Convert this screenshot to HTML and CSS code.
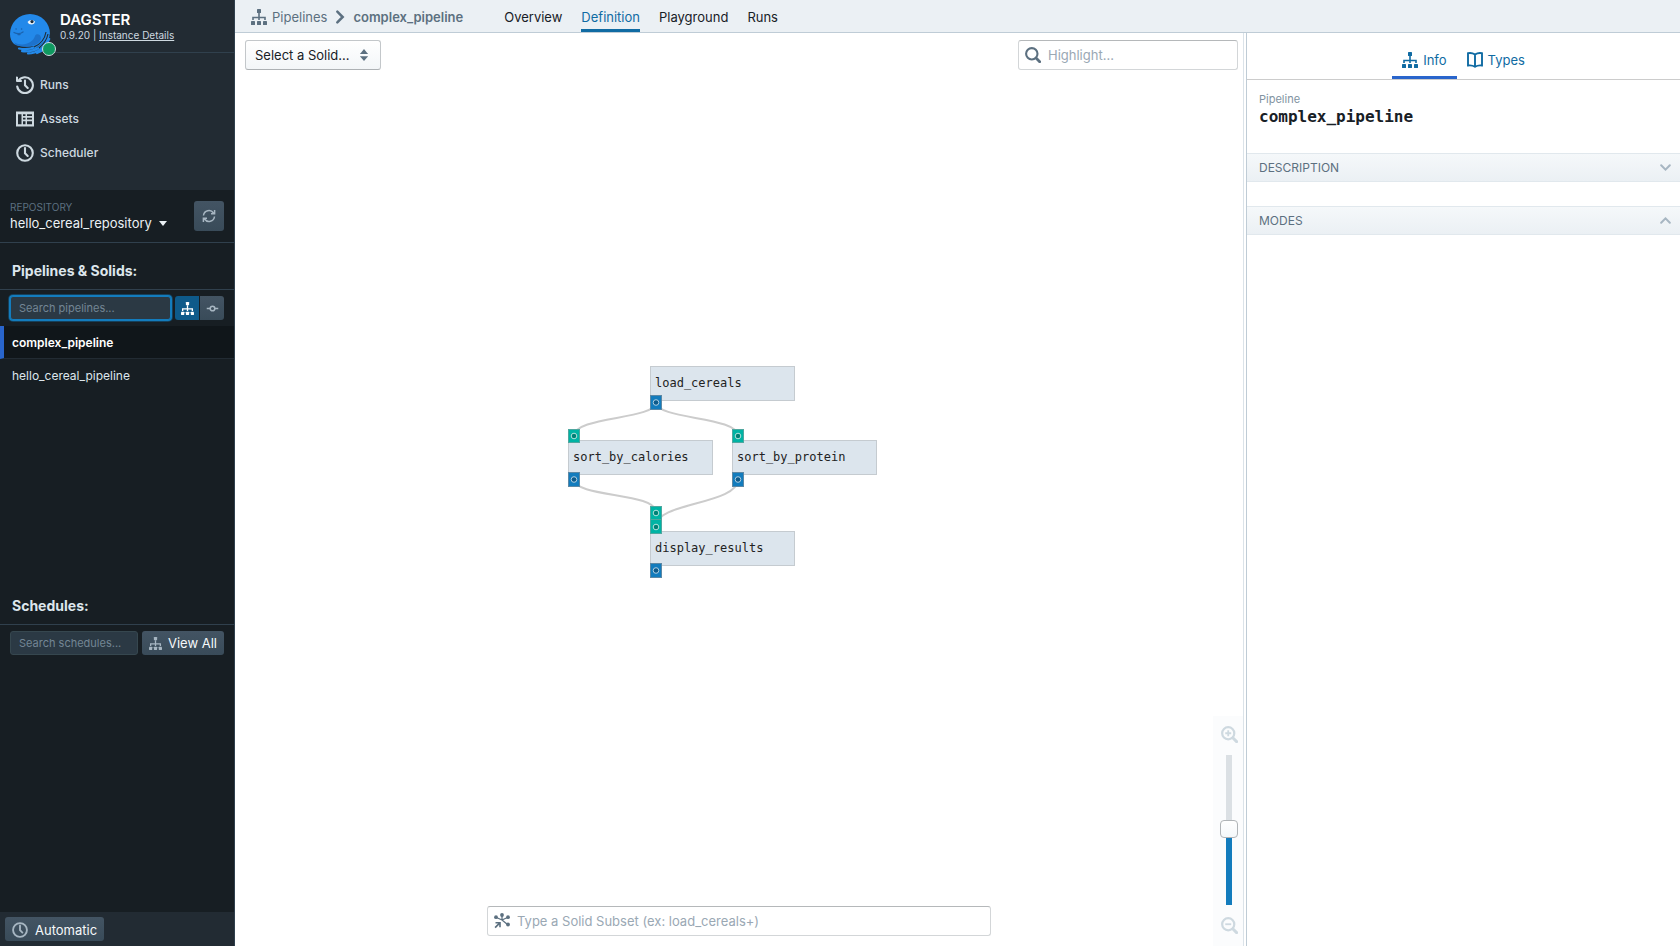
FILE: index.html
```html
<!DOCTYPE html>
<html lang="en">
<head>
<meta charset="utf-8">
<title>complex_pipeline – Dagster</title>
<link rel="stylesheet" href="styles.css">
</head>
<body>
<svg class="sprite" aria-hidden="true">
  <symbol id="i-tree" viewBox="0 0 16 16"><rect x="6" y="0" width="4" height="4" rx=".6"/><rect x="0" y="12" width="4" height="4" rx=".6"/><rect x="6" y="12" width="4" height="4" rx=".6"/><rect x="12" y="12" width="4" height="4" rx=".6"/><path d="M8 4v7M2 11V8.500h12V11" fill="none" stroke="currentColor" stroke-width="1.600"/></symbol>
  <symbol id="i-clock" viewBox="0 0 18 18"><g fill="none" stroke="currentColor" stroke-width="2.100"><circle cx="9" cy="9" r="7.800"/><path d="M9 4v5.200l2.700 2.700" stroke-linecap="round"/></g></symbol>
  <symbol id="i-history" viewBox="0 0 18 18"><g fill="none" stroke="currentColor" stroke-width="2.100"><path d="M2.300 5A7.900 7.900 0 1 1 1.200 10.500M9 4.500v4.700l2.700 2.700" stroke-linecap="round"/></g><path d="M0 .8q1-.8 2 .2v3h3.500q1.200 1 0 2H1Q0 6 0 5z"/></symbol>
  <symbol id="i-search" viewBox="0 0 16 16"><g fill="none" stroke="currentColor"><circle cx="6.800" cy="6.800" r="5.700" stroke-width="2.100"/><path d="M11.300 11.300l3.400 3.400" stroke-width="2.800" stroke-linecap="round"/></g></symbol>
  <symbol id="i-chevron" viewBox="0 0 12 12"><path d="M2 4l4 4 4-4" fill="none" stroke="currentColor" stroke-width="1.900" stroke-linecap="round"/></symbol>
</svg>
<div class="app">
  <aside class="sidebar">
    <div class="top-nav">
      <header class="brand">
        <svg class="logo" viewBox="0 0 46 44" role="img" aria-label="Dagster">
          <g fill="none" stroke="#2389ea" stroke-width="2.200" stroke-linecap="round"><path d="M9 34.500C21 37 32 32 37 20M12 37.200C24 38.500 34 33 38.500 22M18 39.500C27 39.500 35 34 39.200 25M27 39C32 37.500 36 34 38.500 29"/></g>
          <path d="M0 20A20 20 0 0 1 40 20C38 24 36 26 33 28 25 34 11 34 4 30Q0 26 0 20z" fill="#2389ea"/>
          <path d="M4 28.500C13 33 23 29 25 22c1-3 6-2 6 2 0 7-14 11-25 7z" fill="#1d72cc"/>
          <path d="M24 33C31 30 35 24 36 18M29 34C34 30 37 25 38 20" fill="none" stroke="#222b33" stroke-width="1.100"/>
          <path d="M17.500 8q3-3.500 7.500-.5-.5 3-3.500 3-3 0-4-2.500z" fill="#eef5fa"/><circle cx="22" cy="7.600" r="1.600" fill="#1c2b3a"/>
          <path d="M4 18.500q5 2.500 9-.5M6 15h.2M11.500 15h.2M8 20.500h2" fill="none" stroke="#1b62ad" stroke-width="1.300" stroke-linecap="round"/>
          <circle cx="39" cy="35" r="6.500" fill="#0f9960" stroke="#cdd9e0"/>
        </svg>
        <div class="brand-text">
          <div class="brand-name">DAGSTER</div>
          <div class="version">0.9.20 | <a href="#">Instance Details</a></div>
        </div>
      </header>
      <nav class="main-links">
        <a href="#"><svg><use href="#i-history"/></svg>Runs</a>
        <a href="#"><svg viewBox="0 0 18 18"><path fill-rule="evenodd" d="M0 1.500h18v15H0zM2 4.300v10h3.500v-10zM7 4.300v1.800h2.500V4.300zm4 0v1.800h5V4.300zM7 7.700v1.800h2.500V7.700zm4 0v1.800h5V7.700zM7 11.200v3h2.500v-3zm4 0v3h5v-3z"/></svg>Assets</a>
        <a href="#"><svg><use href="#i-clock"/></svg>Scheduler</a>
      </nav>
    </div>
    <div class="repo">
      <div class="repo-info">
        <div class="repo-label">REPOSITORY</div>
        <button class="repo-name">hello_cereal_repository<svg viewBox="0 0 8 5"><path d="M0 0h8L4 5z"/></svg></button>
      </div>
      <button class="dark-btn refresh" aria-label="Reload repository"><svg viewBox="0 0 14 14"><g fill="none" stroke="currentColor" stroke-width="1.500"><path d="M1.500 6.500a5.500 5.500 0 0 1 10-2.500M12.500 7.500a5.500 5.500 0 0 1-10 2.500M12.600 1v3.700H9M1.400 13V9.300H5"/></g></svg></button>
    </div>
    <section class="pipelines">
      <h2>Pipelines &amp; Solids:</h2>
      <div class="tools">
        <input class="dark-input focused" type="text" placeholder="Search pipelines..." aria-label="Search pipelines" autofocus>
        <div class="toggle">
          <button class="dark-btn active" aria-label="Pipelines"><svg><use href="#i-tree"/></svg></button>
          <button class="dark-btn" aria-label="Solids"><svg viewBox="0 0 14 14"><g fill="none" stroke="currentColor" stroke-width="1.700"><circle cx="7" cy="7" r="2.500"/><path d="M.8 7h3.500M9.700 7h3.500"/></g></svg></button>
        </div>
      </div>
      <ul class="list">
        <li class="selected"><a href="#">complex_pipeline</a></li>
        <li><a href="#">hello_cereal_pipeline</a></li>
      </ul>
    </section>
    <section class="schedules">
      <h2>Schedules:</h2>
      <div class="tools">
        <input class="dark-input" type="text" placeholder="Search schedules..." aria-label="Search schedules">
        <button class="dark-btn view-all"><svg><use href="#i-tree"/></svg>View All</button>
      </div>
    </section>
    <footer class="side-footer">
      <button class="dark-btn auto"><svg><use href="#i-clock"/></svg>Automatic</button>
    </footer>
  </aside>
  <div class="page">
    <header class="topbar">
      <nav class="crumbs">
        <a href="#"><svg><use href="#i-tree"/></svg>Pipelines</a>
        <svg class="sep"><use href="#i-chevron"/></svg>
        <strong>complex_pipeline</strong>
      </nav>
      <nav class="tabs">
        <a href="#">Overview</a>
        <a href="#" class="current">Definition</a>
        <a href="#">Playground</a>
        <a href="#">Runs</a>
      </nav>
    </header>
    <div class="content">
      <main class="canvas">
        <svg class="graph" viewBox="568 366 342 248" role="img" aria-label="Pipeline graph">
          <g class="edges">
            <path d="M656 402C656 420 574 416 574 436M656 402C656 420 738 416 738 436M574 479C574 498 656 492 656 512M738 479C738 505 656 502 656 526"/>
          </g>
          <g class="boxes">
            <rect x="650.500" y="366.500" width="144" height="34"/>
            <rect x="568.500" y="440.500" width="144" height="34"/>
            <rect x="732.500" y="440.500" width="144" height="34"/>
            <rect x="650.500" y="531.500" width="144" height="34"/>
          </g>
          <g class="names">
            <text x="655" y="387">load_cereals</text>
            <text x="573" y="461">sort_by_calories</text>
            <text x="737" y="461">sort_by_protein</text>
            <text x="655" y="552">display_results</text>
          </g>
          <g class="out">
            <rect x="650.500" y="395.500" width="11" height="14"/><circle cx="656" cy="402.500" r="2.800"/>
            <rect x="568.500" y="472.500" width="11" height="14"/><circle cx="574" cy="479.500" r="2.800"/>
            <rect x="732.500" y="472.500" width="11" height="14"/><circle cx="738" cy="479.500" r="2.800"/>
            <rect x="650.500" y="563.500" width="11" height="14"/><circle cx="656" cy="570.500" r="2.800"/>
          </g>
          <g class="in">
            <rect x="568.500" y="429.500" width="11" height="13"/><circle cx="574" cy="436" r="2.800"/>
            <rect x="732.500" y="429.500" width="11" height="13"/><circle cx="738" cy="436" r="2.800"/>
            <rect x="650.500" y="506.500" width="11" height="13"/><circle cx="656" cy="513" r="2.800"/>
            <rect x="650.500" y="519.500" width="11" height="14"/><circle cx="656" cy="527" r="2.800"/>
          </g>
        </svg>
        <button class="solid-select">Select a Solid...<svg viewBox="0 0 8 12"><path d="M0 5q0-.5 1-1.300L4 0l3 3.700Q8 4.500 8 5zM0 7.300h8q0 .5-1 1.300L4 12 1 8.600Q0 7.800 0 7.300z"/></svg></button>
        <label class="field highlight"><svg><use href="#i-search"/></svg><input type="text" placeholder="Highlight..." aria-label="Highlight"></label>
        <div class="zoom">
          <button aria-label="Zoom in"><svg viewBox="0 0 16 16"><use href="#i-search"/><path d="M4 6.800h5.600M6.800 4v5.600" stroke="currentColor" stroke-width="1.700"/></svg></button>
          <input type="range" min="0" max="100" value="51" aria-label="Zoom level">
          <button aria-label="Zoom out"><svg viewBox="0 0 16 16"><use href="#i-search"/><path d="M4 6.800h5.600" stroke="currentColor" stroke-width="1.700"/></svg></button>
        </div>
        <label class="field subset"><svg viewBox="0 0 16 16"><g stroke="currentColor" stroke-width="1.300"><path d="M8 7V3M8 7L2.500 4.500M8 7l5.500-2.500M8 7l5.500 4.500"/></g><circle cx="8" cy="2" r="1.900"/><circle cx="2" cy="4.200" r="1.900"/><circle cx="14" cy="4.200" r="1.900"/><circle cx="14" cy="11.500" r="1.900"/><path d="M1.500 9h5.300v5.300H5.200v-2.500l-3.500 3.500L.5 14 4 10.600H1.500z"/></svg><input type="text" placeholder="Type a Solid Subset (ex: load_cereals+)" aria-label="Solid subset"></label>
      </main>
      <div class="divider"></div>
      <aside class="panel">
        <nav class="panel-tabs">
          <a href="#" class="current"><svg><use href="#i-tree"/></svg>Info</a>
          <a href="#"><svg viewBox="0 0 16 16"><path d="M8 2.500Q5 .5 1 1.200v12.300q4-.6 7 1.300 3-1.900 7-1.300V1.200Q11 .5 8 2.500zv12" fill="none" stroke="currentColor" stroke-width="1.900"/></svg>Types</a>
        </nav>
        <div class="panel-title">
          <div class="kind">Pipeline</div>
          <h1>complex_pipeline</h1>
        </div>
        <button class="section-head">DESCRIPTION<svg><use href="#i-chevron"/></svg></button>
        <button class="section-head">MODES<svg class="up"><use href="#i-chevron"/></svg></button>
      </aside>
    </div>
  </div>
</div>
</body>
</html>
```
FILE: styles.css
```css
* { box-sizing: border-box; }
body { margin: 0; font: 13px/18px Inter, "Liberation Sans", sans-serif; color: #182026; }
a { color: inherit; text-decoration: none; }
button, input { font: inherit; color: inherit; }
button { border: 0; padding: 0; background: none; cursor: pointer; }
svg { fill: currentColor; flex: none; }
h1, h2, ul { margin: 0; padding: 0; }
.sprite { position: absolute; width: 0; height: 0; }
.app { display: flex; height: 100vh; }

.sidebar { width: 235px; flex: none; display: flex; flex-direction: column; background: #171e23; border-right: 1px solid #30404d; color: #dde6ec; }
.top-nav { background: #222b33; height: 190px; }
.brand { display: flex; height: 53px; background: linear-gradient(#30404d, #30404d) right bottom / calc(100% - 52px) 1px no-repeat; padding: 14px 0 0 10px; }
.logo { width: 46px; height: 44px; }
.brand-text { padding-left: 4px; }
.brand-name { font-size: 15px; font-weight: 600; line-height: 12px; color: #fff; }
.version { font-size: 10px; line-height: 18px; color: #ced9e0; }
.version a { text-decoration: underline; }
.main-links { padding-top: 15px; color: #ced9e0; }
.main-links a { display: flex; align-items: center; gap: 6px; height: 34px; padding-left: 16px; font-size: 12px; font-weight: 500; }
.main-links svg { width: 18px; height: 18px; }
.repo { display: flex; justify-content: space-between; align-items: center; height: 53px; padding: 0 10px; border-bottom: 1px solid #30404d; }
.repo-label { font-size: 10px; line-height: 14px; color: #5c7080; }
.repo-name { display: flex; align-items: center; gap: 7px; line-height: 18px; color: #ebf1f5; }
.repo-name svg { width: 8px; height: 5px; }
.dark-btn { display: inline-flex; align-items: center; justify-content: center; background: linear-gradient(#435463, #394b59); color: #a7b6c2; border-radius: 3px; }
.refresh { width: 30px; height: 30px; }
.refresh svg { width: 14px; height: 14px; }
h2 { font-size: 14px; font-weight: 700; line-height: 20px; padding: 18px 12px 8px; border-bottom: 1px solid #30404d; }
.pipelines { flex: none; height: 335px; }
.tools { display: flex; gap: 4px; padding: 6px 10px; }
.dark-input { flex: 1; min-width: 0; height: 24px; padding: 0 8px 1px; background: #2b3944; border: 1px solid #36474f; border-radius: 3px; font-size: 11px; outline: 0; }
.dark-input::placeholder { color: #738694; }
.focused { border-color: #137cbd; box-shadow: 0 0 0 1px #137cbd, 0 0 0 2px #15405b; caret-color: #fff; }
.toggle { display: flex; gap: 1px; }
.toggle .dark-btn { width: 24px; height: 24px; border-radius: 0 3px 3px 0; }
.toggle .active { background: #0e5a8a; color: #fff; border-radius: 3px 0 0 3px; }
.toggle svg { width: 13px; height: 13px; }
.list { list-style: none; font-size: 12px; }
.list a { display: block; padding: 8px 12px 6px; line-height: 18px; border-bottom: 1px solid transparent; }
.list .selected a { background: #10161a; border-bottom-color: #222b33; border-left: 4px solid #2965cc; padding-left: 8px; font-weight: 600; color: #fff; }
.schedules { flex: 1; }
.view-all { width: 82px; height: 24px; gap: 6px; color: #f5f8fa; }
.dark-btn.view-all svg { width: 13px; height: 13px; color: #a7b6c2; }
.side-footer { height: 34px; padding: 5px; background: #222b33; }
.auto { height: 24px; padding: 1px 7px 0; gap: 7px; color: #f5f8fa; }
.auto svg { width: 16px; height: 16px; color: #a7b6c2; }

.page { flex: 1; min-width: 0; display: flex; flex-direction: column; }
.topbar { display: flex; gap: 41px; height: 33px; padding-left: 16px; background: #ebf0f4; border-bottom: 1px solid #bfccd6; }
.crumbs { display: flex; align-items: center; gap: 5px; padding-top: 2px; color: #5c7080; }
.crumbs a { display: flex; align-items: center; gap: 5px; }
.crumbs svg { width: 16px; height: 16px; }
.crumbs .sep { transform: rotate(-90deg); }
.crumbs strong { font-weight: 600; }
.tabs { display: flex; gap: 19px; }
.tabs a { padding-top: 8px; border-bottom: 3px solid transparent; }
.tabs .current { color: #106ba3; border-color: #106ba3; }
.content { flex: 1; display: flex; min-height: 0; }
.canvas { flex: 1; position: relative; display: flex; align-items: center; justify-content: center; }
.graph { width: 342px; height: 248px; }
.edges { fill: none; stroke: #ccc; stroke-width: 2; }
.boxes { fill: #dce5ed; stroke: #c5cbd0; }
.names { font: 12px "DejaVu Sans Mono", monospace; fill: #222; }
.out rect { fill: #137cbd; stroke: #5c88a5; }
.out circle { fill: #0e5a8a; stroke: #b0cfe2; }
.in rect { fill: #00b3a4; stroke: #4fa79f; }
.in circle { fill: #008075; stroke: #b0e2dd; }
.solid-select { position: absolute; left: 10px; top: 7px; display: flex; align-items: center; gap: 10px; height: 30px; padding: 0 12px 0 9px; border: 1px solid #c3c7ca; border-bottom-color: #adb1b4; border-radius: 3px; background: linear-gradient(#fff, #f3f6f8); }
.solid-select svg { width: 8px; height: 12px; color: #5c7080; }
.field { position: absolute; display: flex; align-items: center; gap: 7px; height: 30px; padding: 0 6px; border: 1px solid #d3d6d8; border-top-color: #b5b8ba; border-radius: 3px; background: #fff; color: #5c7080; }
.field svg { width: 16px; height: 16px; }
.field input { flex: 1; min-width: 0; border: 0; outline: 0; padding: 0; background: none; }
.field input::placeholder { color: #9aa8b4; }
.highlight { right: 5px; top: 7px; width: 220px; }
.subset { bottom: 10px; left: 25%; width: 50%; }
.zoom { position: absolute; right: 0; bottom: 0; width: 30px; height: 230px; padding: 10px 0 0 2px; display: flex; flex-direction: column; align-items: center; gap: 12px; background: #fbfcfd; color: #ced9e0; }
.zoom button, .zoom svg { display: block; width: 17px; height: 17px; color: #ced9e0; }
.zoom input { appearance: none; writing-mode: vertical-lr; direction: rtl; width: 18px; height: 150px; margin: 0; background: linear-gradient(#dbe0e4 50%, #137cbd 50%) center / 6px 100% no-repeat; }
.zoom input::-webkit-slider-thumb { appearance: none; width: 18px; height: 18px; border: 1px solid #b0b4b7; border-radius: 4px; background: linear-gradient(#fff, #f5f8fa); }
.divider { width: 4px; flex: none; border: solid #bfccd6; border-width: 0 1px; background: #fff; border-left-color: #dbe3e9; }
.panel { width: 433px; flex: none; }
.panel-tabs { display: flex; justify-content: center; height: 47px; padding-top: 8px; border-bottom: 1px solid #ccc; color: #106ba3; }
.panel-tabs a { display: flex; align-items: center; gap: 5px; padding: 2px 10px 0; border-bottom: 3px solid transparent; }
.panel-tabs .current { border-color: #2965cc; }
.panel-tabs svg { width: 16px; height: 16px; }
.panel-title { height: 73px; padding: 12px; }
.kind { font-size: 11px; line-height: 14px; color: #8193a1; }
h1 { font: bold 16px/22px "DejaVu Sans Mono", monospace; }
.section-head { display: flex; justify-content: space-between; align-items: center; width: 100%; height: 29px; margin-bottom: 24px; padding: 0 8px 0 12px; font-size: 12px; color: #5c7080; background: linear-gradient(#f5f8fa, #ebf0f4); border: solid #e1e8ed; border-width: 1px 0; }
.section-head svg { width: 13px; height: 13px; color: #a7b6c2; }
.section-head .up { transform: rotate(180deg); }
```
